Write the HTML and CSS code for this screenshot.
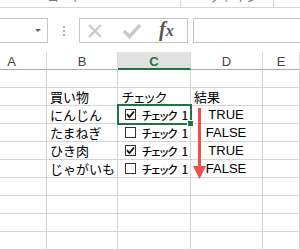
FILE: index.html
```html
<!DOCTYPE html>
<html lang="ja">
<head>
<meta charset="utf-8">
<link rel="stylesheet" href="styles.css">
</head>
<body>
<div class="ribbon">
  <span></span>
  <span class="grp">コード</span>
  <span class="sep"></span>
  <span></span>
  <span class="grp">アドイン</span>
  <span class="sep"></span>
  <span></span>
</div>
<div class="fbar">
  <div class="namebox"><span class="dd"></span></div>
  <div class="dots"><i></i><i></i><i></i></div>
  <div class="btns">
    <svg class="ico-x" width="16" height="16" viewBox="0 0 16 16"><path d="M2 2 L14 14 M14 2 L2 14" stroke="#c9c9c9" stroke-width="2.2" fill="none"/></svg>
    <svg class="ico-ok" width="20" height="16" viewBox="0 0 20 16"><path d="M2 8 L7.5 13.5 L18 2" stroke="#c9c9c9" stroke-width="3.4" fill="none"/></svg>
    <span class="fx">f<span class="x">x</span></span>
  </div>
  <div class="finput"></div>
</div>
<div class="sheet">
  <div class="grid">
    <div class="hd">A</div><div class="hd">B</div><div class="hd hsel">C</div><div class="hd">D</div><div class="hd">E</div>

    <div class="c"></div><div class="c"></div><div class="c"></div><div class="c"></div><div class="c"></div>

    <div class="c"></div><div class="c jp">買い物</div><div class="c jp pk">チェック</div><div class="c jp">結果</div><div class="c"></div>

    <div class="c"></div><div class="c jp">にんじん</div>
    <div class="c sel"><span class="cb on"><svg width="9" height="9" viewBox="0 0 9 9"><path d="M1 4.2 L3.5 7 L8 1.5" stroke="#111" stroke-width="1.8" fill="none"/></svg></span><span class="lbl">チェック<span class="sp"> </span>1</span></div>
    <div class="c b">TRUE</div><div class="c"></div>

    <div class="c"></div><div class="c jp">たまねぎ</div>
    <div class="c"><span class="cb"></span><span class="lbl">チェック<span class="sp"> </span>1</span></div>
    <div class="c b">FALSE</div><div class="c"></div>

    <div class="c"></div><div class="c jp">ひき肉</div>
    <div class="c"><span class="cb on"><svg width="9" height="9" viewBox="0 0 9 9"><path d="M1 4.2 L3.5 7 L8 1.5" stroke="#111" stroke-width="1.8" fill="none"/></svg></span><span class="lbl">チェック<span class="sp"> </span>1</span></div>
    <div class="c b">TRUE</div><div class="c"></div>

    <div class="c"></div><div class="c jp">じゃがいも</div>
    <div class="c"><span class="cb"></span><span class="lbl">チェック<span class="sp"> </span>1</span></div>
    <div class="c b">FALSE</div><div class="c"></div>

    <div class="c"></div><div class="c"></div><div class="c"></div><div class="c"></div><div class="c"></div>
    <div class="c"></div><div class="c"></div><div class="c"></div><div class="c"></div><div class="c"></div>
    <div class="c"></div><div class="c"></div><div class="c"></div><div class="c"></div><div class="c"></div>
    <div class="c"></div><div class="c"></div><div class="c"></div><div class="c"></div><div class="c"></div>
  </div>
  <svg class="arrow" width="20" height="80" viewBox="0 0 20 80"><path d="M9.5 0 V60" stroke="#f04e50" stroke-width="3" fill="none"/><path d="M3 58 L16 58 L9.5 71 Z" fill="#f04e50"/></svg>
</div>
</body>
</html>
```
FILE: styles.css
```css
html, body {
  margin: 0;
  padding: 0;
  background: #fff;
  width: 300px;
  height: 250px;
  overflow: hidden;
  font-family: "Liberation Sans", Arial, sans-serif;
}

.ribbon {
  height: 7px;
  border-bottom: 1px solid #d5d5d5;
  display: grid;
  grid-template-columns: 47px 133px 1px 29px 63px 1px 1fr;
  overflow: hidden;
}
.ribbon .grp {
  font-family: "Noto Sans CJK JP", sans-serif;
  font-size: 12px;
  line-height: 12px;
  margin-top: -9px;
  color: #777;
  white-space: nowrap;
}
.ribbon .sep {
  background: #d5d5d5;
}

.fbar {
  display: flex;
  margin-top: 10px;
  height: 25px;
}
.namebox {
  box-sizing: border-box;
  margin-left: -1px;
  width: 49px;
  height: 25px;
  border: 1px solid #c6c6c6;
  display: flex;
  justify-content: flex-end;
  align-items: center;
}
.dd {
  width: 0;
  height: 0;
  border-left: 3px solid transparent;
  border-right: 3px solid transparent;
  border-top: 3px solid #666;
  margin-right: 6px;
}
.dots {
  width: 31px;
  display: flex;
  flex-direction: column;
  align-items: center;
  justify-content: center;
  gap: 2px;
}
.dots i {
  width: 2px;
  height: 2px;
  background: #b5b5b5;
}
.btns {
  box-sizing: border-box;
  width: 109px;
  height: 25px;
  border: 1px solid #c6c6c6;
  display: flex;
  align-items: center;
  padding-left: 7px;
}
.ico-x { margin-right: 19px; }
.ico-ok { margin-right: 17px; }
.fx {
  font-family: "Liberation Serif", "DejaVu Serif", serif;
  font-style: italic;
  font-weight: bold;
  font-size: 20px;
  color: #555;
  line-height: 20px;
  margin-top: -1px;
}
.fx .x { font-size: 16px; }
.finput {
  box-sizing: border-box;
  margin-left: 5px;
  flex: 1;
  height: 25px;
  border: 1px solid #c6c6c6;
  margin-right: -2px;
}

.sheet {
  position: relative;
  margin-top: 9px;
}
.grid {
  display: grid;
  grid-template-columns: 47px 71px 73px 72px 1fr;
  grid-auto-rows: 18px;
}
.grid > div {
  box-sizing: border-box;
  border-right: 1px solid #d4d4d4;
  border-bottom: 1px solid #d4d4d4;
  font-size: 13px;
  color: #000;
  white-space: nowrap;
  display: flex;
  align-items: center;
}
.grid > .hd {
  justify-content: center;
  color: #444;
  border-bottom: 1px solid #ababab;
  border-right-color: #dadada;
  padding-top: 1px;
}
.grid > .hd:first-child {
  padding-left: 0;
  justify-content: flex-end;
  padding-right: 30px;
}
.grid > .hsel {
  background: #e1e1e1;
  color: #217346;
  border-bottom: 2px solid #217346;
  font-weight: bold;
  padding-top: 2px;
}
.c { padding-left: 3px; }
.jp {
  font-family: "Noto Sans CJK JP", sans-serif;
  font-size: 13px;
  line-height: 17px;
}
.pk {
  font-feature-settings: "palt";
  padding-left: 4px;
}
.grid > .b {
  justify-content: center;
  padding-left: 0;
  padding-right: 1px;
  font-size: 13px;
}
.grid > .c:has(.cb) {
  padding-left: 7px;
}
.cb {
  box-sizing: border-box;
  width: 11px;
  height: 11px;
  border: 1px solid #333;
  background: #fff;
  display: flex;
  align-items: center;
  justify-content: center;
  margin-right: 6px;
}
.lbl {
  font-family: "Noto Sans CJK JP", sans-serif;
  font-size: 11px;
  font-weight: 500;
  font-feature-settings: "palt";
  letter-spacing: -0.7px;
}
.lbl .sp {
  display: inline-block;
  width: 5px;
}
.sel { position: relative; }
.sel::after {
  content: "";
  position: absolute;
  top: -2px;
  left: -1px;
  right: -2px;
  bottom: -2px;
  border: 2px solid #217346;
}
.sel::before {
  content: "";
  position: absolute;
  right: -4px;
  bottom: -4px;
  width: 5px;
  height: 5px;
  background: #217346;
  border: 1px solid #fff;
  z-index: 2;
}
.arrow {
  position: absolute;
  left: 190px;
  top: 56px;
}
```
